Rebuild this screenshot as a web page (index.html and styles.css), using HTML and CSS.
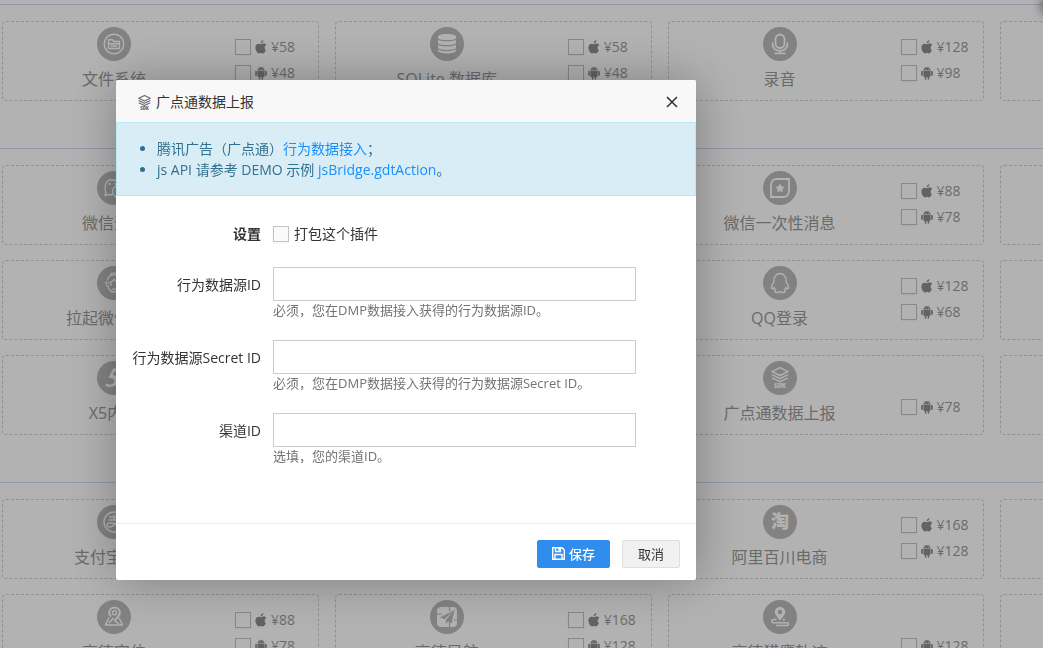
FILE: index.html
```html
<!DOCTYPE html>
<html lang="zh-CN">
<head>
<meta charset="utf-8">
<title>广点通数据上报</title>
<link rel="stylesheet" href="styles.css">
</head>
<body>
<svg class="sprite" aria-hidden="true">
  <symbol id="apple" viewBox="0 0 12 14"><path d="M8.4 0.3c.1 1.5-1.200 3-2.700 3C5.500 1.900 6.900.5 8.400.3zM10.900 10.100C10.300 11.600 9.200 13.500 8 13.500c-.8 0-1.100-.5-2-.5s-1.300.5-2 .5C2.300 13.500.4 10.300.4 7.600c0-2.500 1.600-3.900 3.200-3.900 1 0 1.800.6 2.400.6s1.500-.7 2.700-.7c1 0 2 .5 2.600 1.400-2.300 1.400-1.900 4.200-.4 5.100z"/></symbol>
  <symbol id="android" viewBox="0 0 12 14"><path d="M2.400 4.400C2.500 3 3.300 2.200 4.200 1.700L3.500.6l.3-.2.800 1.200a4.200 4.200 0 0 1 2.800 0L8.200.4l.3.2-.7 1.100c.9.5 1.700 1.300 1.800 2.700zM2.400 4.900h7.200v5.300c0 .5-.4.800-.8.800h-.6v1.900a.8.800 0 0 1-1.600 0V11H5.400v1.900a.8.800 0 0 1-1.600 0V11h-.6c-.5 0-.8-.4-.8-.8zM.2 5.700a.8.800 0 0 1 1.700 0v3.200a.8.800 0 0 1-1.700 0zm9.900 0a.8.800 0 0 1 1.700 0v3.200a.8.800 0 0 1-1.700 0z"/><path class="cut" d="M4 2.800h.8v.7H4zm3.200 0H8v.7h-.8z"/></symbol>
  <symbol id="layers" viewBox="0 0 34 34"><path class="ln" d="M17 6.700l8 3.900-8 3.900-8-3.900zM9 13.700l8 3.900 8-3.900M9 16.800l8 3.900 8-3.900"/><text class="sdk" x="17" y="27.200" text-anchor="middle">SDK</text></symbol>
</svg>

<main class="page">
  <section class="group">
    <article class="card">
      <div class="plugin"><svg class="badge" viewBox="0 0 34 34"><circle class="ln" cx="17" cy="17" r="9.800"/><path class="ln" d="M11.500 21.500v-8.700h4l1.500 1.700h5.500v7zM11.500 16.800h11M14 19h6"/></svg><h3>文件系统</h3></div>
      <div class="prices">
        <label><input type="checkbox"><svg><use href="#apple"/></svg>¥58</label>
        <label><input type="checkbox"><svg><use href="#android"/></svg>¥48</label>
      </div>
    </article>
    <article class="card">
      <div class="plugin"><svg class="badge" viewBox="0 0 34 34"><path class="fl" d="M8 9.500C8 6 26 6 26 9.500v14C26 27.500 8 27.500 8 23.500z"/><path class="rule" d="M8 11.800c2 2.500 16 2.500 18 0M8 16.800c2 2.500 16 2.500 18 0M8 21.700c2 2.500 16 2.500 18 0"/></svg><h3>SQLite 数据库</h3></div>
      <div class="prices">
        <label><input type="checkbox"><svg><use href="#apple"/></svg>¥58</label>
        <label><input type="checkbox"><svg><use href="#android"/></svg>¥48</label>
      </div>
    </article>
    <article class="card">
      <div class="plugin"><svg class="badge" viewBox="0 0 34 34"><rect class="ln thick" x="12.500" y="7.500" width="9" height="13.500" rx="4.500"/><path class="ln thick" d="M9.700 15.500v2c0 8.500 14.600 8.500 14.600 0v-2M17 23.800v2.500M11.500 26.300h11"/></svg><h3>录音</h3></div>
      <div class="prices">
        <label><input type="checkbox"><svg><use href="#apple"/></svg>¥128</label>
        <label><input type="checkbox"><svg><use href="#android"/></svg>¥98</label>
      </div>
    </article>
    <article class="card"></article>
  </section>

  <section class="group">
    <article class="card">
      <div class="plugin"><svg class="badge" viewBox="0 0 34 34"><path class="ln" d="M15.500 23.500c-2 .5-3.500.2-4.500 0l-3 1.200.8-3C7 14.500 8.500 8.700 15 8.700c4 0 7.500 2.500 8 6.300"/><circle class="ln" cx="21" cy="20.500" r="5.500"/><path class="fl" d="M11.500 12h2v2h-2zm6 0h2v2h-2zm1 7H20v1.500h-1.500zm4 0H24v1.500h-1.500z"/></svg><h3>微信登录</h3></div>
    </article>
    <article class="card"></article>
    <article class="card">
      <div class="plugin"><svg class="badge" viewBox="0 0 34 34"><path class="ln thick" d="M13.500 8H26v12.500c0 3-2.500 5.500-5.500 5.500H8V13.500C8 10.500 10.500 8 13.500 8z"/><path class="fl" d="M17 12.500l1.500 2.800 3.100.6-2.200 2.300.4 3.100L17 20l-2.800 1.300.4-3.100-2.200-2.300 3.100-.6z"/></svg><h3>微信一次性消息</h3></div>
      <div class="prices">
        <label><input type="checkbox"><svg><use href="#apple"/></svg>¥88</label>
        <label><input type="checkbox"><svg><use href="#android"/></svg>¥78</label>
      </div>
    </article>
    <article class="card"></article>

    <article class="card">
      <div class="plugin"><svg class="badge" viewBox="0 0 34 34"><path class="ln" d="M11 12.500C12 8 22 8 23 12.500M13 8.500c2-1.700 6-1.700 8 0M11 12v2.500M10 15.500c-2 1-1 4.500 1 4.500 1.500 8 10.500 8 12 0 2 0 3-3.500 1-4.500M11 17c3-.5 5-1.800 6-4 1 2.200 3 3.500 6 4M15 22.500c1 1.200 3 1.200 4 0"/><path class="fl" d="M13 17.500h2v2h-2zm6 0h2v2h-2z"/></svg><h3>拉起微信客服</h3></div>
    </article>
    <article class="card"></article>
    <article class="card">
      <div class="plugin"><svg class="badge" viewBox="0 0 34 34"><path class="ln" d="M10.800 16.200C10 4.500 24 4.500 23.200 16.200c1.800 2.200 2.600 4.600 2 6.300-.5.900-1.600.2-2.300-1.100-.3 1-.8 1.900-1.500 2.600 1.800 1 1 2.500-1.600 2.500-1.400 0-2.300-.6-2.800-.9-.5.300-1.400.9-2.800.9-2.600 0-3.400-1.500-1.600-2.500-.7-.7-1.200-1.600-1.500-2.600-.7 1.300-1.800 2-2.300 1.100-.6-1.700.2-4.100 2-6.300z"/></svg><h3>QQ登录</h3></div>
      <div class="prices">
        <label><input type="checkbox"><svg><use href="#apple"/></svg>¥128</label>
        <label><input type="checkbox"><svg><use href="#android"/></svg>¥68</label>
      </div>
    </article>
    <article class="card"></article>

    <article class="card">
      <div class="plugin"><svg class="badge" viewBox="0 0 34 34"><path class="fl" d="M16 7.500h9l-1 3h-6.500l-1.800 3.600c9.300 1 8.300 11.900-3.700 12-2.500 0-4.300-1.500-3-3 1.300-1.300 2.700.6 4.200.5 5.800-.6 6.300-6.800-1.700-6.600z"/></svg><h3>X5内核</h3></div>
    </article>
    <article class="card"></article>
    <article class="card">
      <div class="plugin"><svg class="badge" viewBox="0 0 34 34"><use href="#layers"/></svg><h3>广点通数据上报</h3></div>
      <div class="prices">
        <label><input type="checkbox"><svg><use href="#android"/></svg>¥78</label>
      </div>
    </article>
    <article class="card"></article>
  </section>

  <section class="group">
    <article class="card">
      <div class="plugin"><svg class="badge" viewBox="0 0 34 34"><circle class="ln" cx="17" cy="17" r="10"/><path class="ln" d="M12 12h10M17 9.500V15M11.500 15h11M20.500 15c-1.500 6-9.500 9-10.500 5.500-.8-3.500 5-3.500 14.500 1"/></svg><h3>支付宝支付</h3></div>
    </article>
    <article class="card"></article>
    <article class="card">
      <div class="plugin"><svg class="badge" viewBox="0 0 34 34"><text class="tao" x="17" y="23" text-anchor="middle">淘</text></svg><h3>阿里百川电商</h3></div>
      <div class="prices">
        <label><input type="checkbox"><svg><use href="#apple"/></svg>¥168</label>
        <label><input type="checkbox"><svg><use href="#android"/></svg>¥128</label>
      </div>
    </article>
    <article class="card"></article>

    <article class="card">
      <div class="plugin"><svg class="badge" viewBox="0 0 34 34"><path class="ln thick" d="M14 16.500c-4-4-1-8.800 3.500-8.800s7.500 4.800 3.500 8.800L17.500 21"/><circle class="ln" cx="17.500" cy="12.800" r="2"/><path class="ln" d="M12 17.500L8.500 25h17L22 17.500M12 23l4.500-5M17 20l5 4"/></svg><h3>高德定位</h3></div>
      <div class="prices">
        <label><input type="checkbox"><svg><use href="#apple"/></svg>¥88</label>
        <label><input type="checkbox"><svg><use href="#android"/></svg>¥78</label>
      </div>
    </article>
    <article class="card">
      <div class="plugin"><svg class="badge" viewBox="0 0 34 34"><rect class="fl" x="7" y="7" width="20" height="20" rx="4"/><path class="rule" d="M19.500 7v4M7 14h5M19.500 23v4M24 20h3"/><path class="dark" d="M24.500 10L10 17.500l4.300 1.700zM24.500 10l-8.800 10 .3 4 1.800-2.400 3.700 1.900z"/></svg><h3>高德导航</h3></div>
      <div class="prices">
        <label><input type="checkbox"><svg><use href="#apple"/></svg>¥168</label>
        <label><input type="checkbox"><svg><use href="#android"/></svg>¥128</label>
      </div>
    </article>
    <article class="card">
      <div class="plugin"><svg class="badge" viewBox="0 0 34 34"><path class="fl" fill-rule="evenodd" d="M17 20.500c-2-2.500-5.200-5.800-5.200-8.500a5.200 5.200 0 0 1 10.400 0c0 2.700-3.200 6-5.200 8.500zM17 9.700a2.300 2.300 0 1 0 0 4.600 2.300 2.300 0 0 0 0-4.600z"/><path class="ln" d="M13.500 19.500H11c-3 0-3 3.300 0 3.300h13c2.200 0 2.200 2.700 0 2.700H13M20 19.800h2"/></svg><h3>高德猎鹰轨迹</h3></div>
      <div class="prices">
        <label><input type="checkbox"><svg><use href="#android"/></svg>¥128</label>
      </div>
    </article>
    <article class="card"></article>
  </section>
</main>

<div class="side-panel"></div>
<div class="shade"></div>

<div class="dialog" role="dialog" aria-labelledby="dialog-title">
  <header class="dialog-head">
    <svg class="title-icon" viewBox="8 5 18 23"><use href="#layers" width="34" height="34"/></svg>
    <h2 id="dialog-title">广点通数据上报</h2>
    <button class="close" type="button" aria-label="关闭"><svg viewBox="0 0 12 12"><path d="M1 1l10 10M11 1L1 11"/></svg></button>
  </header>
  <ul class="notice">
    <li>腾讯广告（广点通）<a href="#">行为数据接入</a>；</li>
    <li>js API 请参考 DEMO 示例 <a href="#">jsBridge.gdtAction</a>。</li>
  </ul>
  <form class="form" id="plugin-form">
    <div class="row setting">
      <strong>设置</strong>
      <label class="pack"><input type="checkbox">打包这个插件</label>
    </div>
    <div class="row">
      <label for="source-id">行为数据源ID</label>
      <div><input class="text" id="source-id" type="text"><p>必须，您在DMP数据接入获得的行为数据源ID。</p></div>
    </div>
    <div class="row">
      <label for="secret-id">行为数据源Secret ID</label>
      <div><input class="text" id="secret-id" type="text"><p>必须，您在DMP数据接入获得的行为数据源Secret ID。</p></div>
    </div>
    <div class="row">
      <label for="channel-id">渠道ID</label>
      <div><input class="text" id="channel-id" type="text"><p>选填，您的渠道ID。</p></div>
    </div>
  </form>
  <footer class="dialog-foot">
    <button class="btn primary" type="submit" form="plugin-form"><svg viewBox="0 0 13 13"><path d="M.7.700h9.300l2.300 2.300v9.300H.7zM3.500.7v3.800h5V.7M3 12.300V7.500h7v4.800M7 1.500v2"/></svg>保存</button>
    <button class="btn" type="button">取消</button>
  </footer>
</div>
</body>
</html>
```

FILE: styles.css
```css
* { box-sizing: border-box; }

body {
  margin: 0;
  overflow: hidden;
  background: #fff;
  color: #333;
  font: 14px/20px "Open Sans", "Noto Sans CJK SC", sans-serif;
}

h2, h3, p, ul { margin: 0; padding: 0; font-weight: 400; }
button, input { font-family: inherit; }
.sprite { position: absolute; width: 0; height: 0; }

/* plugin list */
.page { height: 100vh; overflow: hidden; padding-top: 4px; }

.group {
  display: grid;
  grid-template-columns: repeat(4, 1fr);
  gap: 15px 16px;
  min-width: 1317px;
  margin-bottom: 47px;
  padding: 16px 0 0 2px;
  border-top: 1px solid #cddcf0;
}

.card {
  display: flex;
  height: 80px;
  border: 1px dashed #d0d0d0;
  border-radius: 4px;
  color: #999;
}

.plugin {
  display: flex;
  flex: 0 0 222px;
  flex-direction: column;
  align-items: center;
  padding-top: 5px;
}
.plugin h3 { margin-top: 6px; font-size: 16px; line-height: 24px; }

.badge { width: 34px; height: 34px; border-radius: 50%; background: #bbb; color: #fff; }
.ln { fill: none; stroke: currentColor; stroke-width: 1.4; stroke-linejoin: round; }
.thick { stroke-width: 1.8; }
.fl { fill: currentColor; }
.rule { fill: none; stroke: #bbb; stroke-width: 1.2; }
.dark { fill: #bbb; }
.sdk { fill: currentColor; font: 800 6px "Open Sans", sans-serif; }
.tao { fill: currentColor; font: 900 18px "Noto Sans CJK SC", sans-serif; }

.prices {
  display: flex;
  flex-direction: column;
  justify-content: flex-end;
  gap: 6px;
  padding: 0 0 17px 10px;
}
.prices label { display: flex; align-items: center; gap: 4px; height: 20px; }
.prices svg { width: 12px; height: 14px; fill: #8e8e8e; }
.cut { fill: #fff; }

input[type="checkbox"] {
  appearance: none;
  width: 16px;
  height: 16px;
  margin: 0;
  border: 1px solid #c3c3c3;
  background: #fafafa;
  box-shadow: 0 1px 2px rgba(0, 0, 0, .05);
}
.prices input[type="checkbox"] { background: #fff; }

.side-panel {
  position: fixed;
  top: 0;
  left: 100%;
  width: 40px;
  height: 12px;
  box-shadow: 0 0 12px rgba(0, 0, 0, .8);
}
.shade { position: fixed; inset: 0; background: rgba(0, 0, 0, .3); }

/* dialog */
.dialog {
  position: fixed;
  top: 80px;
  left: 116px;
  display: flex;
  flex-direction: column;
  width: 580px;
  min-height: 500px;
  border-radius: 2px;
  background: #fff;
  box-shadow: 1px 1px 50px rgba(0, 0, 0, .3);
}

.dialog-head {
  display: flex;
  align-items: center;
  gap: 5px;
  height: 42px;
  padding: 2px 18px 0 22px;
  border-radius: 2px 2px 0 0;
  background: #f8f8f8;
}
.dialog-head h2 { flex: 1; font-size: 14px; line-height: 20px; }
.title-icon { width: 13px; height: 17px; color: #666; }
.title-icon use { stroke-width: 1; }
.close { padding: 0; border: 0; background: none; }
.close svg { display: block; width: 12px; height: 12px; fill: none; stroke: #2d2c3b; stroke-width: 1.5; }

.notice {
  padding: 15px 20px 15px 40px;
  border: 1px solid #bce8f1;
  background: #d9edf7;
  color: #31708f;
  line-height: 21px;
}
a { color: #1890ff; text-decoration: none; }

.form { flex: 1; padding: 28px 60px 0 0; }
.row {
  display: grid;
  grid-template-columns: 145px 1fr;
  column-gap: 12px;
  margin-bottom: 21px;
  line-height: 36px;
  text-align: right;
}
.row > div { text-align: left; }
.setting { margin-bottom: 23px; line-height: 20px; }
.pack { display: flex; align-items: center; gap: 5px; }
.text { display: block; width: 100%; height: 34px; padding: 6px 10px; border: 1px solid #ccc; font-size: 14px; }
.row p { color: #737373; font-size: 13px; line-height: 18px; }

.dialog-foot {
  display: flex;
  justify-content: flex-end;
  gap: 12px;
  padding: 16px 16px 12px;
  border-top: 1px solid #eee;
}
.btn {
  display: flex;
  align-items: center;
  gap: 3px;
  height: 28px;
  padding: 0 15px 1px;
  border: 1px solid #dedede;
  border-radius: 2px;
  background: #f1f1f1;
  color: #333;
  font-size: 13px;
}
.primary { padding: 0 14px 1px; gap: 4px; border-color: #2e8ded; background: #2e8ded; color: #fff; font-weight: 500; }
.primary svg { width: 13px; height: 13px; fill: none; stroke: #fff; stroke-width: 1.4; }
```
